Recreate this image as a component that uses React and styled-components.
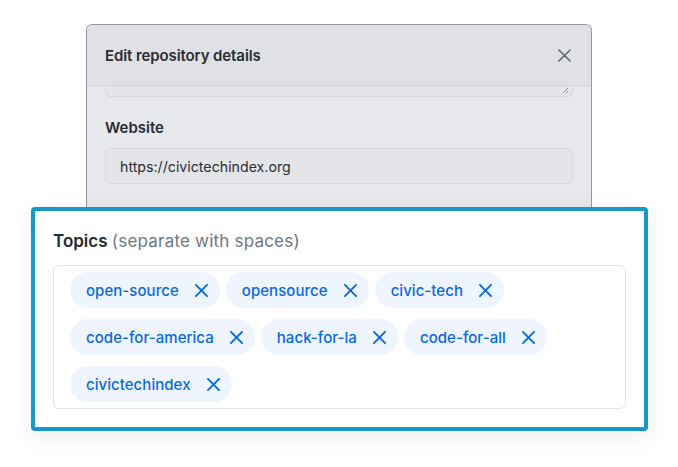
import React from "react";
import styled, { createGlobalStyle } from "styled-components";

const GlobalStyle = createGlobalStyle`
  html, body {
    margin: 0;
    padding: 0;
    background: #ffffff;
  }
  body {
    font-family: Inter, "Noto Sans", "Liberation Sans", sans-serif;
    color: #24292f;
    -webkit-font-smoothing: antialiased;
  }
`;

const Stage = styled.div`
  position: relative;
  width: 678px;
  height: 467px;
  overflow: hidden;
  padding-top: 24px;
  box-sizing: border-box;
`;

const Modal = styled.div`
  width: 506px;
  height: 260px;
  margin: 0 auto;
  box-sizing: border-box;
  border: 1px solid #94989e;
  border-bottom: none;
  border-radius: 6px 6px 0 0;
  background: #e7e8eb;
  overflow: hidden;
`;

const ModalHeader = styled.div`
  height: 60px;
  display: flex;
  align-items: center;
  justify-content: space-between;
  padding: 0 18px;
  background: #dfe1e5;
  border-bottom: 1px solid #d0d3d8;
`;

const ModalTitle = styled.h2`
  margin: 0;
  font-size: 15px;
  font-weight: 600;
  color: #2a2e33;
  letter-spacing: -0.1px;
`;

const CloseButton = styled.button`
  display: flex;
  align-items: center;
  justify-content: center;
  width: 24px;
  height: 24px;
  margin-right: -3px;
  padding: 0;
  border: none;
  background: transparent;
  color: #5b6168;
`;

const ModalBody = styled.div`
  padding: 0 18px;
`;

const TextareaTail = styled.div`
  position: relative;
  height: 10px;
  border: 1px solid #d3d6da;
  border-top: none;
  border-radius: 0 0 6px 6px;
  background: #e4e5e8;
`;

const ResizeGrip = styled.svg`
  position: absolute;
  right: 3px;
  bottom: 2px;
`;

const FieldLabel = styled.div`
  margin-top: 21px;
  font-size: 15px;
  line-height: 20px;
  font-weight: 600;
  color: #2a2e33;
`;

const TextInput = styled.div`
  margin-top: 10px;
  height: 36px;
  box-sizing: border-box;
  display: flex;
  align-items: center;
  padding: 0 14px;
  border: 1px solid #d6d8dc;
  border-radius: 6px;
  background: #e4e5e8;
  font-size: 14.2px;
  color: #2a2e33;
`;

const Callout = styled.div`
  position: absolute;
  left: 31px;
  top: 207px;
  width: 617px;
  height: 224px;
  box-sizing: border-box;
  padding: 18px;
  border: 4px solid #1699c7;
  border-radius: 4px;
  background: #ffffff;
  box-shadow: 0 6px 22px rgba(20, 30, 40, 0.08);
`;

const TopicsLabel = styled.div`
  font-size: 17px;
  line-height: 24px;
  font-weight: 600;
  color: #24292f;
  margin-bottom: 12px;
`;

const Hint = styled.span`
  font-weight: 400;
  color: #6e7781;
  letter-spacing: 0.2px;
`;

const TagBox = styled.div`
  display: flex;
  flex-wrap: wrap;
  align-content: flex-start;
  gap: 11px 6px;
  padding: 6px 16px;
  border: 1px solid #e1e4e8;
  border-radius: 6px;
`;

const Tag = styled.span`
  display: inline-flex;
  align-items: center;
  gap: 16px;
  height: 36px;
  box-sizing: border-box;
  padding: 0 12px 0 16px;
  border-radius: 18px;
  background: #eef5ff;
  color: #0969da;
  font-size: 15px;
  font-weight: 500;
  letter-spacing: 0.05px;
`;

function XIcon({ size = 14, stroke = 2 }) {
  return (
    <svg width={size} height={size} viewBox="0 0 14 14" fill="none">
      <path
        d="M1 1 L13 13 M13 1 L1 13"
        stroke="currentColor"
        strokeWidth={stroke}
        strokeLinecap="round"
      />
    </svg>
  );
}

const topics = [
  "open-source",
  "opensource",
  "civic-tech",
  "code-for-america",
  "hack-for-la",
  "code-for-all",
  "civictechindex",
];

export default function App() {
  return (
    <>
      <GlobalStyle />
      <Stage>
        <Modal>
          <ModalHeader>
            <ModalTitle>Edit repository details</ModalTitle>
            <CloseButton>
              <XIcon size={13} stroke={1.6} />
            </CloseButton>
          </ModalHeader>
          <ModalBody>
            <TextareaTail>
              <ResizeGrip width="7" height="7" viewBox="0 0 7 7">
                <path d="M1 6 L6 1 M4 6 L6 4" stroke="#8b9096" strokeWidth="1" />
              </ResizeGrip>
            </TextareaTail>
            <FieldLabel>Website</FieldLabel>
            <TextInput>https://civictechindex.org</TextInput>
          </ModalBody>
        </Modal>
        <Callout>
          <TopicsLabel>
            Topics <Hint>(separate with spaces)</Hint>
          </TopicsLabel>
          <TagBox>
            {topics.map((t) => (
              <Tag key={t}>
                {t}
                <XIcon size={13} stroke={2} />
              </Tag>
            ))}
          </TagBox>
        </Callout>
      </Stage>
    </>
  );
}
